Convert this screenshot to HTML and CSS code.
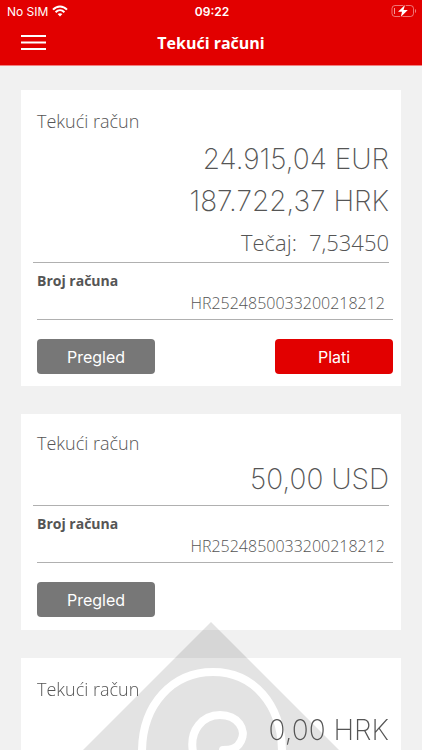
FILE: index.html
```html
<!DOCTYPE html>
<html lang="hr">
<head>
    <meta charset="UTF-8">
    <meta name="viewport" content="width=device-width, initial-scale=1.0">
    <title>Tekući računi</title>
    <link rel="stylesheet" href="styles.css">
</head>
<body>
    <header class="header">
        <div class="status-bar">
            <div class="carrier">
                <span>No SIM</span>
                <svg width="16" height="12" viewBox="0 0 16 12" fill="none" stroke="#fff" stroke-width="2">
                    <path d="M1 4.6C5 .3 11 .3 15 4.6"/>
                    <path d="M3.6 7.2c2.6-2.6 6.2-2.6 8.8 0"/>
                    <path d="M8 11.5 5.6 9.1c1.4-1.3 3.4-1.3 4.8 0z" fill="#fff" stroke="none"/>
                </svg>
            </div>
            <span class="clock">09:22</span>
            <svg class="battery" width="26" height="14" viewBox="0 0 26 14" fill="none">
                <rect x="1" y="1.5" width="21.5" height="11" rx="3" stroke="#fff" stroke-opacity=".45"/>
                <path d="M24 5v4c1.5-.6 1.5-3.4 0-4z" fill="#fff" fill-opacity=".5"/>
                <path d="M3.5 4v6" stroke="#fff" stroke-opacity=".6"/>
                <path d="M14 1 7 7.8h4L9.8 13l7-7h-4.3z" fill="#fff" stroke="#e20000" stroke-width="1.5" paint-order="stroke"/>
            </svg>
        </div>
        <div class="nav-bar">
            <button class="menu-btn" type="button" aria-label="Izbornik">
                <svg width="26" height="16" viewBox="0 0 26 16" stroke="#fff" stroke-width="2">
                    <path d="M0 1h25M0 7.500h25M0 14h25"/>
                </svg>
            </button>
            <h1>Tekući računi</h1>
        </div>
    </header>

    <main class="accounts">
        <section class="card">
            <h2>Tekući račun</h2>
            <div class="balance">
                <p class="amount">24.915,04 EUR</p>
                <p class="amount">187.722,37 HRK</p>
                <p class="rate"><span>Tečaj:</span> <span>7,53450</span></p>
            </div>
            <div class="number">
                <h3>Broj računa</h3>
                <p>HR2524850033200218212</p>
            </div>
            <div class="actions">
                <button class="btn" type="button">Pregled</button>
                <button class="btn btn-pay" type="button">Plati</button>
            </div>
        </section>

        <section class="card card-compact">
            <h2>Tekući račun</h2>
            <div class="balance">
                <p class="amount">50,00 USD</p>
            </div>
            <div class="number">
                <h3>Broj računa</h3>
                <p>HR2524850033200218212</p>
            </div>
            <div class="actions">
                <button class="btn" type="button">Pregled</button>
            </div>
        </section>

        <section class="card card-last">
            <h2>Tekući račun</h2>
            <div class="balance">
                <p class="amount">0,00 HRK</p>
            </div>
        </section>
    </main>

    <svg class="watermark" width="256" height="128" viewBox="0 0 256 128" fill="none">
        <path d="M128 0 256 128H0z" fill="#000" fill-opacity=".11"/>
        <path d="M59 130C59 82 90 50 130 50C170 50 199 82 199 130" stroke="#fff" stroke-width="8"/>
        <path d="M110 130C106 108 120 93 137 93C155 93 164 108 158 119C154 127 148 128 140 128" stroke="#fff" stroke-width="8" stroke-linecap="round"/>
    </svg>
</body>
</html>
```

FILE: styles.css
```css
* {
    box-sizing: border-box;
}

body {
    margin: 0;
    height: 100vh;
    overflow: hidden;
    background: #f1f1f1;
    color: #555;
    font-family: "Open Sans", "Noto Sans", sans-serif;
}

h1, h2, h3, p {
    margin: 0;
}

button {
    border: none;
    cursor: pointer;
}

.header {
    height: 66px;
    background: #e20000;
    color: #fff;
    border-bottom: 1px solid #f08080;
}

.status-bar {
    display: grid;
    grid-template-columns: 1fr auto 1fr;
    align-items: center;
    height: 22px;
    padding: 0 5px 0 7px;
    font-family: Inter, sans-serif;
    font-size: 12px;
}

.carrier {
    display: flex;
    align-items: center;
    gap: 4px;
}

.clock {
    font-weight: 600;
}

.battery {
    justify-self: end;
}

.nav-bar {
    display: grid;
    grid-template-columns: 1fr auto 1fr;
    align-items: center;
    height: 42px;
    padding: 0 21px;
}

.menu-btn {
    display: flex;
    justify-self: start;
    padding: 0;
    background: none;
}

h1 {
    font-size: 16px;
    font-weight: 700;
}

.accounts {
    display: flex;
    flex-direction: column;
    gap: 28px;
    padding: 24px 21px;
}

.card {
    padding: 18px 8px 12px 12px;
    background: #fff;
}

.card-compact {
    padding: 16px 8px 13px 12px;
}

/* keeps the text above the watermark */
.card > * {
    position: relative;
    z-index: 1;
}

h2 {
    padding-left: 4px;
    font-size: 18px;
    font-weight: 300;
    line-height: 26px;
}

.balance {
    margin-right: 4px;
    padding-top: 4px;
    border-bottom: 1px solid #b0b0b0;
    text-align: right;
}

.card-compact .balance {
    padding: 2px 0 5px;
}

.card-last .balance {
    padding: 7px 0 5px;
}

.amount {
    font-family: Inter, sans-serif;
    font-size: 28px;
    font-weight: 200;
    line-height: 42px;
}

.rate {
    display: flex;
    justify-content: flex-end;
    gap: 12px;
    font-size: 22px;
    font-weight: 300;
    line-height: 40px;
}

.number {
    margin-left: 4px;
    padding: 7px 0 5px;
    border-bottom: 1px solid #b0b0b0;
}

h3 {
    font-size: 14px;
    font-weight: 700;
    line-height: 22px;
}

.number p {
    padding-right: 8px;
    font-size: 16px;
    font-weight: 300;
    line-height: 22px;
    text-align: right;
}

.actions {
    display: flex;
    justify-content: space-between;
    margin: 19px 0 0 4px;
}

.btn {
    width: 118px;
    height: 35px;
    border-radius: 4px;
    background: #777;
    color: #fff;
    font-family: Inter, sans-serif;
    font-size: 16px;
}

.btn-pay {
    background: #e20000;
}

.watermark {
    position: fixed;
    bottom: 0;
    left: 50%;
    transform: translateX(-50%);
    pointer-events: none;
}
```
